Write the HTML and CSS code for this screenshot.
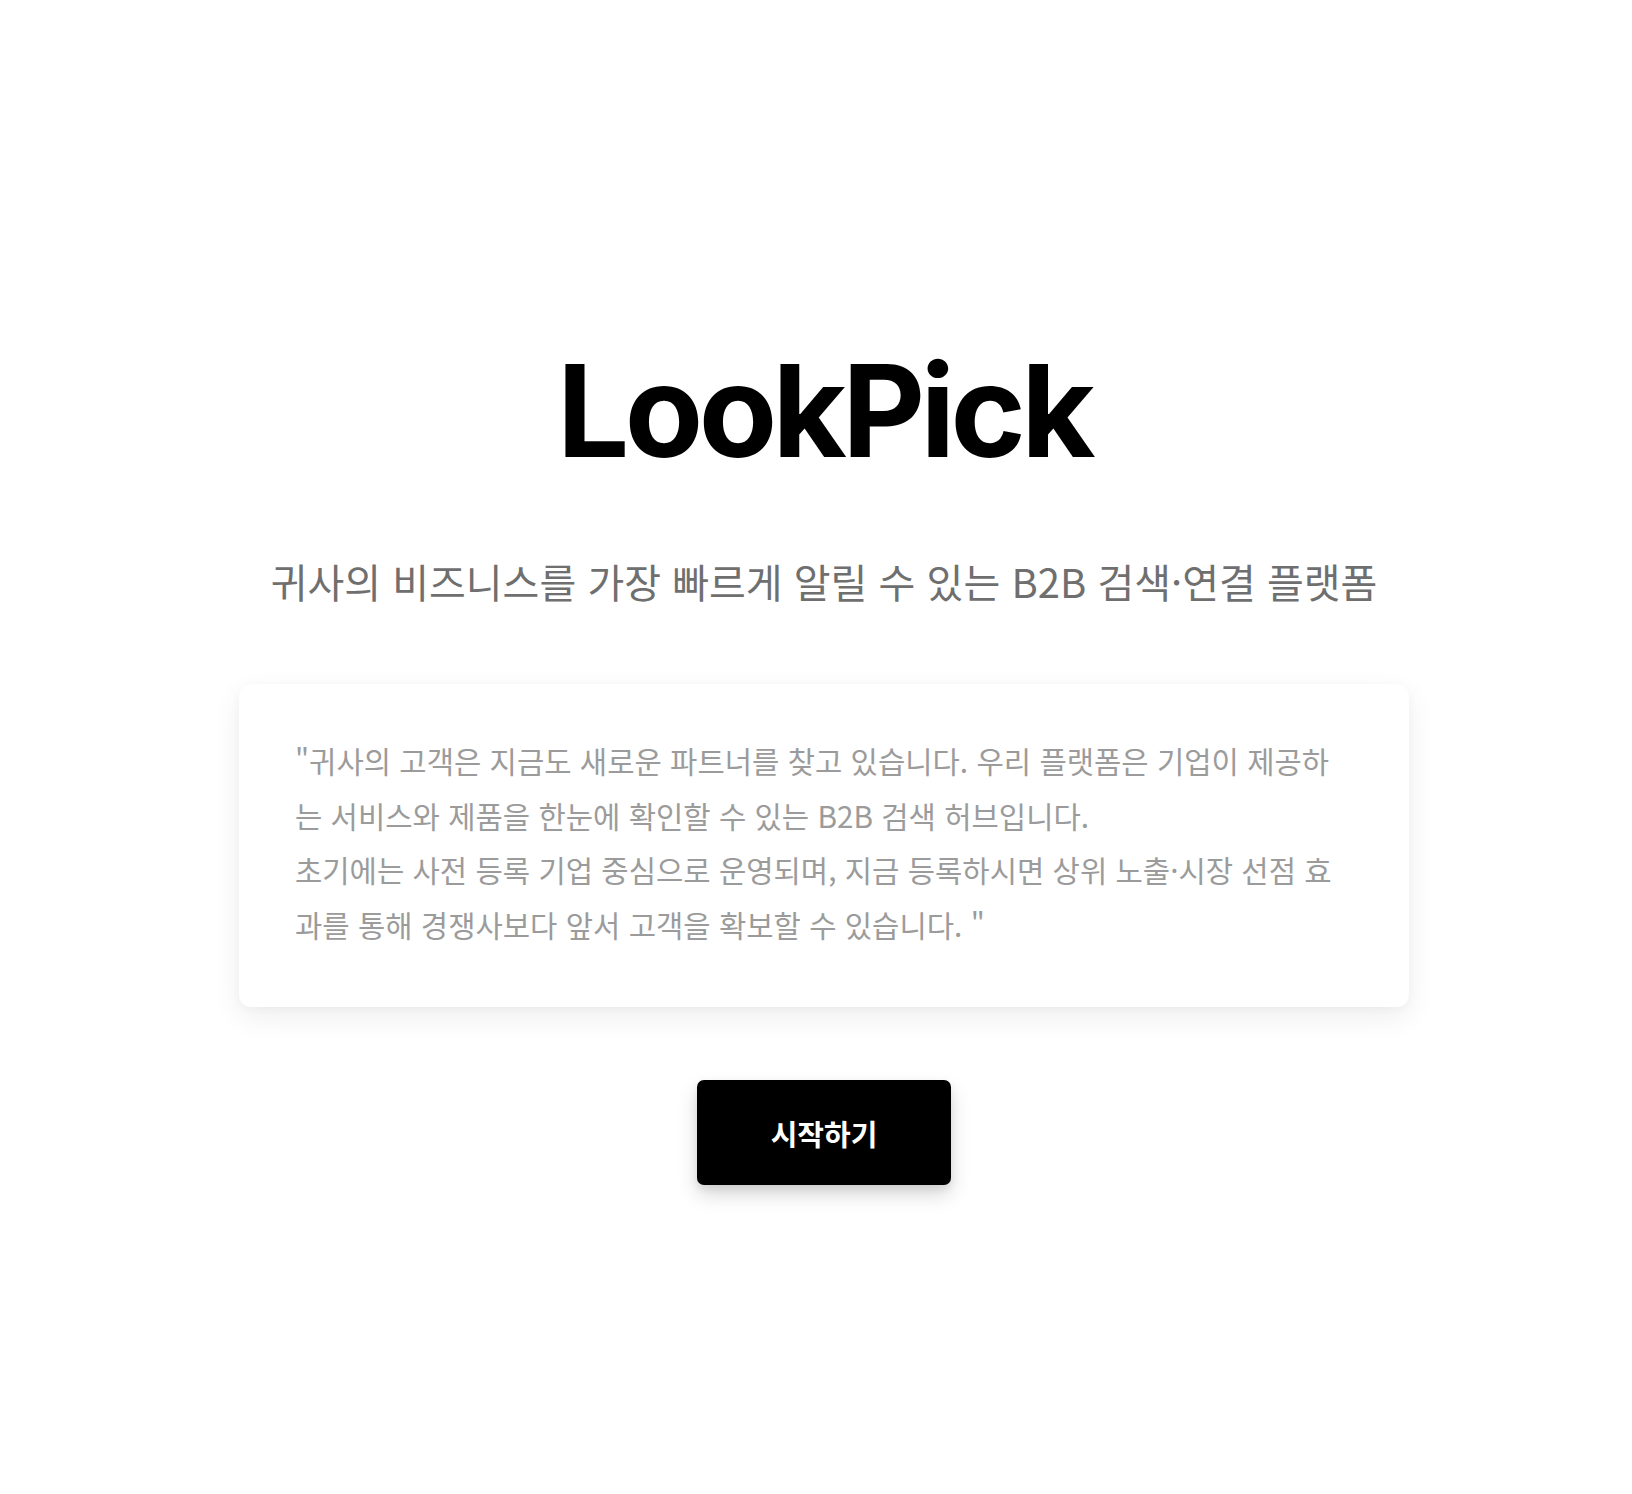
FILE: index.html
```html
<!DOCTYPE html>
<html lang="ko">
<head>
<meta charset="utf-8">
<title>LookPick</title>
<link rel="stylesheet" href="styles.css">
</head>
<body>
<main class="hero">
  <h1 class="logo">LookPick</h1>
  <p class="tagline">귀사의 비즈니스를 가장 빠르게 알릴 수 있는 B2B 검색·연결 플랫폼</p>
  <section class="card">
    <p class="card-text">"귀사의 고객은 지금도 새로운 파트너를 찾고 있습니다. 우리 플랫폼은 기업이 제공하는 서비스와 제품을 한눈에 확인할 수 있는 B2B 검색 허브입니다.<br>초기에는 사전 등록 기업 중심으로 운영되며, 지금 등록하시면 상위 노출·시장 선점 효과를 통해 경쟁사보다 앞서 고객을 확보할 수 있습니다. "</p>
  </section>
  <button class="start-btn" type="button">시작하기</button>
</main>
</body>
</html>
```

FILE: styles.css
```css
html, body {
  margin: 0;
  padding: 0;
  background: #ffffff;
}

body {
  font-family: "Noto Sans CJK KR", "Noto Sans", sans-serif;
}

.hero {
  display: flex;
  flex-direction: column;
  align-items: center;
  padding: 347px 0 0 16px;
  min-height: 1494px;
  box-sizing: border-box;
}

.logo {
  margin: 0;
  font-family: Inter, "Noto Sans CJK KR", sans-serif;
  font-size: 128px;
  line-height: 128px;
  font-weight: 700;
  letter-spacing: -0.036em;
  color: #000000;
}

.tagline {
  margin: 82px 0 0;
  font-size: 40px;
  line-height: 48px;
  color: #6f6f6f;
  font-weight: 400;
}

.card {
  margin-top: 79px;
  width: 1170px;
  box-sizing: border-box;
  padding: 50px 56px 55px;
  background: #ffffff;
  border-radius: 12px;
  box-shadow: 0 10px 30px rgba(0, 0, 0, 0.07), 0 2px 8px rgba(0, 0, 0, 0.03);
}

.card-text {
  margin: 0;
  font-size: 29.7px;
  line-height: 54.5px;
  color: #9b9b9b;
  word-break: break-all;
}

.start-btn {
  margin-top: 73px;
  width: 254px;
  height: 105px;
  border: none;
  border-radius: 7px;
  background: #000000;
  color: #ffffff;
  font-family: "Noto Sans CJK KR", sans-serif;
  font-size: 29px;
  font-weight: 700;
  box-shadow: 0 10px 20px rgba(0, 0, 0, 0.15), 0 4px 8px rgba(0, 0, 0, 0.08);
  cursor: pointer;
}
```
